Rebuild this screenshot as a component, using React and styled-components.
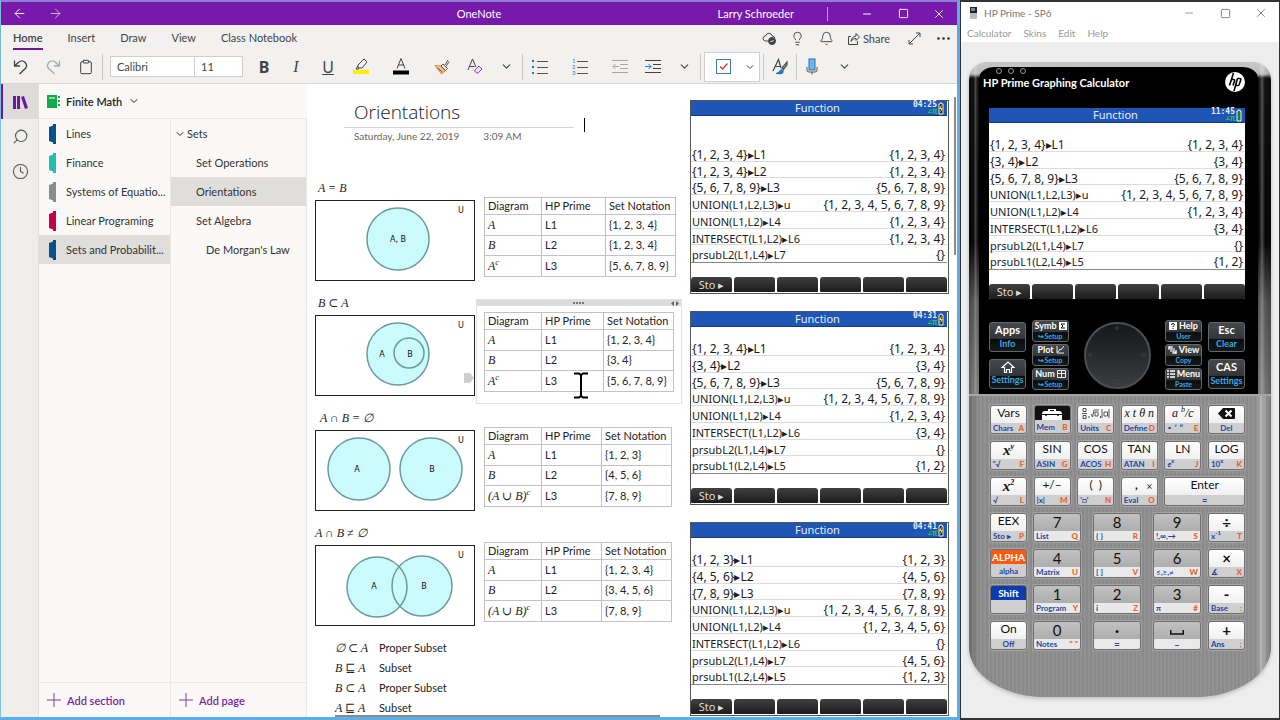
import React from "react";
import styled, { createGlobalStyle } from "styled-components";
import { ArrowLeft, ArrowRight, Bell, ChevronDown, Clipboard, Clock, Lightbulb, Minus, Search, Square, X } from "lucide-react";

const ui = `Lato, "Open Sans", sans-serif`;
const screenFont = `"Noto Sans", "Open Sans", sans-serif`;
const notes = `Lato, "Open Sans", sans-serif`;
const math = `"Liberation Serif", "DejaVu Serif", serif`;

const sections = [
  { name: "Lines", color: "#0b4f8c" },
  { name: "Finance", color: "#21bfae" },
  { name: "Systems of Equatio...", color: "#848d90" },
  { name: "Linear Programing", color: "#c4004f" },
  { name: "Sets and Probabilit...", color: "#0b4f8c", selected: true },
];

const pages = [
  { name: "Sets", indent: 3, open: true },
  { name: "Set Operations", indent: 25 },
  { name: "Orientations", indent: 25, selected: true },
  { name: "Set Algebra", indent: 25 },
  { name: "De Morgan's Law", indent: 35 },
];

const blocks = [
  {
    label: "A = B",
    indent: 3,
    circles: [[82, 38, 31]],
    letters: [["A, B", 82, 41]],
    middle: 64,
    rows: [["A", "L1", "{1, 2, 3, 4}"], ["B", "L2", "{1, 2, 3, 4}"], ["A", "L3", "{5, 6, 7, 8, 9}", "c"]],
  },
  {
    label: "B ⊂ A",
    indent: 3,
    circles: [[82, 38, 31], [93, 37, 15]],
    letters: [["A", 66, 41], ["B", 94, 41]],
    middle: 62,
    active: true,
    rows: [["A", "L1", "{1, 2, 3, 4}"], ["B", "L2", "{3, 4}"], ["A", "L3", "{5, 6, 7, 8, 9}", "c"]],
  },
  {
    label: "A ∩ B = ∅",
    indent: 5,
    circles: [[43, 38, 31], [115, 38, 31]],
    letters: [["A", 41, 41], ["B", 116, 41]],
    middle: 60,
    rows: [["A", "L1", "{1, 2, 3}"], ["B", "L2", "{4, 5, 6}"], ["(A ∪ B)", "L3", "{7, 8, 9}", "c"]],
  },
  {
    label: "A ∩ B ≠ ∅",
    indent: 0,
    circles: [[61, 41, 30], [106, 40, 30]],
    letters: [["A", 58, 43], ["B", 108, 43]],
    middle: 60,
    rows: [["A", "L1", "{1, 2, 3, 4}"], ["B", "L2", "{3, 4, 5, 6}"], ["(A ∪ B)", "L3", "{7, 8, 9}", "c"]],
  },
];

const subsets = [
  ["∅ ⊂ A", "Proper Subset"],
  ["B ⊑ A", "Subset"],
  ["B ⊂ A", "Proper Subset"],
  ["A ⊑ A", "Subset"],
];

const screens = [
  {
    time: "04:25",
    lines: [
      ["{1, 2, 3, 4}▸L1", "{1, 2, 3, 4}"],
      ["{1, 2, 3, 4}▸L2", "{1, 2, 3, 4}"],
      ["{5, 6, 7, 8, 9}▸L3", "{5, 6, 7, 8, 9}"],
      ["UNION(L1,L2,L3)▸u", "{1, 2, 3, 4, 5, 6, 7, 8, 9}"],
      ["UNION(L1,L2)▸L4", "{1, 2, 3, 4}"],
      ["INTERSECT(L1,L2)▸L6", "{1, 2, 3, 4}"],
      ["prsubL2(L1,L4)▸L7", "{}"],
    ],
  },
  {
    time: "04:31",
    lines: [
      ["{1, 2, 3, 4}▸L1", "{1, 2, 3, 4}"],
      ["{3, 4}▸L2", "{3, 4}"],
      ["{5, 6, 7, 8, 9}▸L3", "{5, 6, 7, 8, 9}"],
      ["UNION(L1,L2,L3)▸u", "{1, 2, 3, 4, 5, 6, 7, 8, 9}"],
      ["UNION(L1,L2)▸L4", "{1, 2, 3, 4}"],
      ["INTERSECT(L1,L2)▸L6", "{3, 4}"],
      ["prsubL2(L1,L4)▸L7", "{}"],
      ["prsubL1(L2,L4)▸L5", "{1, 2}"],
    ],
  },
  {
    time: "04:41",
    lines: [
      ["{1, 2, 3}▸L1", "{1, 2, 3}"],
      ["{4, 5, 6}▸L2", "{4, 5, 6}"],
      ["{7, 8, 9}▸L3", "{7, 8, 9}"],
      ["UNION(L1,L2,L3)▸u", "{1, 2, 3, 4, 5, 6, 7, 8, 9}"],
      ["UNION(L1,L2)▸L4", "{1, 2, 3, 4, 5, 6}"],
      ["INTERSECT(L1,L2)▸L6", "{}"],
      ["prsubL2(L1,L4)▸L7", "{4, 5, 6}"],
      ["prsubL1(L2,L4)▸L5", "{1, 2, 3}"],
    ],
  },
];

const functionKeys = [
  { top: "Vars", sub: "Chars", alpha: "A" },
  { top: <ToolboxIcon />, sub: "Mem", alpha: "B", tone: "dark" },
  { top: <TemplateIcon />, sub: "Units", alpha: "C" },
  { top: "x t θ n", sub: "Define", alpha: "D", serif: true },
  { top: <>a <sup>b</sup>/c</>, sub: "∘ ′ ″", alpha: "E", serif: true },
  { top: <DeleteIcon />, sub: "Del" },
  { top: <>x<sup>y</sup></>, sub: "ⁿ√", alpha: "F", serif: true, large: true },
  { top: "SIN", sub: "ASIN", alpha: "G" },
  { top: "COS", sub: "ACOS", alpha: "H" },
  { top: "TAN", sub: "ATAN", alpha: "I" },
  { top: "LN", sub: <i>e<sup>x</sup></i>, alpha: "J" },
  { top: "LOG", sub: <span>10<sup>x</sup></span>, alpha: "K" },
  { top: <>x<sup>2</sup></>, sub: "√", alpha: "L", serif: true, large: true },
  { top: "+/–", sub: "|x|", alpha: "M" },
  { top: "(  )", sub: "'□'", alpha: "N" },
  { top: <CommaLabel />, sub: "Eval", alpha: "O" },
  { top: "Enter", sub: "≈", wide: true, sign: true },
];

const numberRows = [
  [
    { top: "EEX", sub: "Sto ▸", alpha: "P" },
    { top: "7", sub: "List", alpha: "Q" },
    { top: "8", sub: "{ }", alpha: "R" },
    { top: "9", sub: "!,∞,→", alpha: "S" },
    { top: "÷", sub: <span>x<sup>-1</sup></span>, alpha: "T", large: true },
  ],
  [
    { top: "ALPHA", sub: "alpha", tone: "orange" },
    { top: "4", sub: "Matrix", alpha: "U" },
    { top: "5", sub: "[ ]", alpha: "V" },
    { top: "6", sub: "≤,≥,≠", alpha: "W" },
    { top: "×", sub: "∡", alpha: "X", large: true },
  ],
  [
    { top: "Shift", sub: "", tone: "blue" },
    { top: "1", sub: "Program", alpha: "Y" },
    { top: "2", sub: "i", alpha: "Z" },
    { top: "3", sub: "π", alpha: "#" },
    { top: "-", sub: "Base", alpha: ":", large: true },
  ],
  [
    { top: "On", sub: "Off" },
    { top: "0", sub: "Notes", alpha: "\" \"" },
    { top: "·", sub: "=", sign: true, large: true },
    { top: <SpaceIcon />, sub: "–", sign: true },
    { top: "+", sub: "Ans", alpha: ";", large: true },
  ],
];

export default function App() {
  return (
    <>
      <GlobalStyle />
      <Desktop>
        <OneNote />
        <HpPrime />
      </Desktop>
    </>
  );
}

function OneNote() {
  return (
    <NoteWindow>
      <TitleBar>
        <TitleGroup>
          <TitleButton aria-label="Back"><ArrowLeft size={15} strokeWidth={1.5} /></TitleButton>
          <TitleButton aria-label="Forward" $dim><ArrowRight size={15} strokeWidth={1.5} /></TitleButton>
        </TitleGroup>
        <span>OneNote</span>
        <TitleGroup $end>
          <Account>Larry Schroeder</Account>
          <TitleButton aria-label="Minimize"><Minus size={12} strokeWidth={2} /></TitleButton>
          <TitleButton aria-label="Maximize"><Square size={11} strokeWidth={2} /></TitleButton>
          <TitleButton aria-label="Close"><X size={14} strokeWidth={1.5} /></TitleButton>
        </TitleGroup>
      </TitleBar>
      <Ribbon>
        <TabRow>
          <Tab $active>Home</Tab>
          <Tab>Insert</Tab>
          <Tab>Draw</Tab>
          <Tab>View</Tab>
          <Tab>Class Notebook</Tab>
          <TabActions>
            <Tool $w={28} aria-label="Sync"><CloudIcon /></Tool>
            <Tool $w={29} aria-label="Tell me"><Lightbulb size={15} strokeWidth={1.5} /></Tool>
            <Tool $w={29} aria-label="Notifications"><Bell size={15} strokeWidth={1.5} /></Tool>
            <ShareButton><ShareIcon /> Share</ShareButton>
            <Tool $w={30} aria-label="Full screen"><ExpandIcon /></Tool>
            <Tool $w={28} aria-label="More"><DotsIcon /></Tool>
          </TabActions>
        </TabRow>
        <Toolbar>
          <Tool $w={32} aria-label="Undo"><UndoIcon /></Tool>
          <Tool $w={32} aria-label="Redo" $dim><RedoIcon /></Tool>
          <Tool $w={33} aria-label="Paste"><Clipboard size={16} strokeWidth={1.5} /></Tool>
          <Divider />
          <FontBox>
            <FontInput aria-label="Font" defaultValue="Calibri" $w={83} />
            <FontInput aria-label="Font size" defaultValue="11" $w={48} />
          </FontBox>
          <Tool $w={32} $letter="bold">B</Tool>
          <Tool $w={32} $letter="italic">I</Tool>
          <Tool $w={32} $letter="underline">U</Tool>
          <Tool $w={34} aria-label="Highlight"><HighlightIcon /></Tool>
          <Tool $w={46} aria-label="Font color"><FontColorIcon /></Tool>
          <Tool $w={36} aria-label="Format painter"><PainterIcon /></Tool>
          <Tool $w={30} aria-label="Clear formatting"><EraserIcon /></Tool>
          <Tool $w={32} aria-label="More font options"><ChevronDown size={13} strokeWidth={2} /></Tool>
          <Divider />
          <Tool $w={34} aria-label="Bullets"><BulletsIcon /></Tool>
          <Tool $w={46} aria-label="Numbering"><NumberingIcon /></Tool>
          <Tool $w={34} aria-label="Decrease indent" $dim><IndentIcon out /></Tool>
          <Tool $w={32} aria-label="Increase indent"><IndentIcon /></Tool>
          <Tool $w={31} aria-label="More paragraph options"><ChevronDown size={13} strokeWidth={2} /></Tool>
          <Divider />
          <TagBox>
            <Tool $w={36} aria-label="To do tag"><TodoIcon /></Tool>
            <Tool $w={18} aria-label="More tags"><ChevronDown size={12} strokeWidth={2} /></Tool>
          </TagBox>
          <Divider />
          <Tool $w={32} aria-label="Styles"><StylesIcon /></Tool>
          <Divider />
          <Tool $w={30} aria-label="Dictate"><MicIcon /></Tool>
          <Tool $w={34} aria-label="More"><ChevronDown size={13} strokeWidth={2} /></Tool>
        </Toolbar>
      </Ribbon>
      <Workspace>
        <Rail>
          <RailButton $active aria-label="Notebooks"><BooksIcon /></RailButton>
          <RailButton aria-label="Search"><FlippedSearch size={17} strokeWidth={1.5} /></RailButton>
          <RailButton aria-label="Recent"><Clock size={17} strokeWidth={1.5} /></RailButton>
        </Rail>
        <Navigation>
          <NotebookButton>
            <NotebookIcon />
            Finite Math
            <ChevronDown size={12} strokeWidth={2} />
          </NotebookButton>
          <NavLists>
            <NavColumn $w={132}>
              {sections.map((section) => (
                <NavItem key={section.name} $indent={10} $gap={10} $selected={section.selected}>
                  <svg width="7" height="20" viewBox="0 0 7 20">
                    <path d="M0 3l4-1.500V0h3v20H4v-1.500L0 17z" fill={section.color} />
                  </svg>
                  {section.name}
                </NavItem>
              ))}
              <AddButton><AddIcon /> Add section</AddButton>
            </NavColumn>
            <NavColumn $w={136}>
              {pages.map((page) => (
                <NavItem key={page.name} $indent={page.indent} $gap={1} $selected={page.selected}>
                  {page.open && <ChevronDown size={12} strokeWidth={2} />}
                  {page.name}
                </NavItem>
              ))}
              <AddButton><AddIcon /> Add page</AddButton>
            </NavColumn>
          </NavLists>
        </Navigation>
        <Canvas>
          <NotesColumn>
            <PageHeader>
              <PageTitle>Orientations</PageTitle>
              <PageDate><span>Saturday, June 22, 2019</span><span>3:09 AM</span></PageDate>
              <Caret />
            </PageHeader>
            {blocks.map((block) => <SetBlock key={block.label} block={block} />)}
            <SubsetList>
              {subsets.map(([symbol, text]) => (
                <SubsetRow key={symbol}><MathText>{symbol}</MathText><span>{text}</span></SubsetRow>
              ))}
            </SubsetList>
            <PageScroll />
          </NotesColumn>
          <ScreenColumn>
            {screens.map((screen) => (
              <CalcScreen key={screen.time} screen={screen} framed />
            ))}
          </ScreenColumn>
          <ScrollThumb />
        </Canvas>
      </Workspace>
    </NoteWindow>
  );
}

function SetBlock({ block }) {
  return (
    <Block>
      <div>
        <BlockLabel $indent={block.indent}>{block.label}</BlockLabel>
        <VennBox>
          <svg width="158" height="79" viewBox="0 0 158 79">
            {block.circles.map(([x, y, r]) => <circle key={x} cx={x} cy={y} r={r} fill="#ccfbfe" />)}
            {block.circles.map(([x, y, r]) => (
              <circle key={x} cx={x} cy={y} r={r} fill="none" stroke="#6c9a9b" strokeWidth="1.5" />
            ))}
            {block.letters.map(([text, x, y]) => <VennText key={text} x={x} y={y}>{text}</VennText>)}
            <VennText x="145" y="12">U</VennText>
          </svg>
          {block.active && <DragTag viewBox="0 0 10 10"><path d="M0 0h6l4 5-4 5H0z" fill="#cfcfcf" /></DragTag>}
        </VennBox>
      </div>
      <NoteFrame $active={block.active}>
        <FrameHandle $active={block.active}>
          <svg width="12" height="3" viewBox="0 0 12 3">
            <path d="M0 1h2M3 1h2M6 1h2M9 1h2" stroke="#555" strokeWidth="1.500" />
          </svg>
          <svg width="9" height="5" viewBox="0 0 9 5"><path d="M3 0v5L0 2.500zM5 0v5l3-2.500z" fill="#666" /></svg>
        </FrameHandle>
        <SetTable>
          <colgroup>
            <TableCol $w={57} /><TableCol $w={block.middle} /><TableCol $w={70} />
          </colgroup>
          <thead>
            <tr><th>Diagram</th><th>HP Prime</th><th>Set Notation</th></tr>
          </thead>
          <tbody>
            {block.rows.map(([name, list, value, power]) => (
              <tr key={list}>
                <td><MathText>{name}{power && <sup>{power}</sup>}</MathText></td>
                <td>{list}</td>
                <td>{value}</td>
              </tr>
            ))}
          </tbody>
        </SetTable>
        {block.active && (
          <TextCursor viewBox="0 0 16 27">
            <path d="M1 1.500h5l2 1.500 2-1.500h5M8 3v21M1 25.500h5l2-1.500 2 1.500h5" fill="none" stroke="#000" strokeWidth="2" />
          </TextCursor>
        )}
      </NoteFrame>
    </Block>
  );
}

function CalcScreen({ screen, framed }) {
  return (
    <ScreenFrame $framed={framed}>
      <ScreenHeader>
        <span />
        <span>Function</span>
        <ScreenStatus>
          <StatusText>{screen.time}<Angle>∠π</Angle></StatusText>
          <svg width="6" height="13" viewBox="0 0 6 13">
            <path d="M1 2h1V1h2v1h1v10H1z" fill={framed ? "#222" : "#17803a"} stroke="#eee" />
            {framed && <path d="M4 2L1 7h2l-1 4 3-5H3z" fill="#ffe11a" />}
          </svg>
        </ScreenStatus>
      </ScreenHeader>
      <ScreenLines>
        {screen.lines.map(([input, result]) => (
          <ScreenLine key={input}>
            <Entry $call={!input.startsWith("{")}>{input}</Entry>
            <span>{result}</span>
          </ScreenLine>
        ))}
      </ScreenLines>
      <SoftKeys>
        <SoftKey>Sto ▸</SoftKey>
        {[2, 3, 4, 5, 6].map((n) => <SoftKey key={n} aria-label={`Soft key ${n}`} />)}
      </SoftKeys>
    </ScreenFrame>
  );
}

function HpPrime() {
  return (
    <PrimeWindow>
      <PrimeTitle>
        <svg width="7" height="12" viewBox="0 0 7 12">
          <rect width="7" height="12" rx="1" fill="#bbb" /><rect width="7" height="6" fill="#222" /><rect x="1" y="1" width="4" height="3" fill="#789" />
        </svg>
        <PrimeName>HP Prime - SP6</PrimeName>
        <PrimeControl aria-label="Minimize"><Minus size={12} strokeWidth={1.5} /></PrimeControl>
        <PrimeControl aria-label="Maximize"><Square size={11} strokeWidth={2} /></PrimeControl>
        <PrimeControl aria-label="Close"><X size={14} strokeWidth={1.5} /></PrimeControl>
      </PrimeTitle>
      <PrimeMenu>
        <button>Calculator</button><button>Skins</button><button>Edit</button><button>Help</button>
      </PrimeMenu>
      <PrimeBody>
        <Case>
          <Glass>
            <Leds><i /><i /><i /></Leds>
            <Brand>
              HP Prime Graphing Calculator
              <svg width="20" height="20" viewBox="0 0 20 20">
                <circle cx="10" cy="10" r="10" fill="#fff" />
                <path d="M8.500 1L4.500 13.500M6.500 7.500h2q1.500 0 1 1.500L8 13.500M12.500 6.500L9 19M12.500 6.500h2.200q1.500 0 1 1.500l-1.500 4.500q-.4 1-1.600 1h-1.700" fill="none" stroke="#000" strokeWidth="1.600" />
              </svg>
            </Brand>
            <CalcScreen screen={{ time: "11:45", lines: screens[1].lines }} />
            <ControlPad>
              <PadColumn $gap={7}>
                <DarkKey $tall><span>Apps</span><small>Info</small></DarkKey>
                <DarkKey $tall aria-label="Home settings"><span><HomeIcon /></span><small>Settings</small></DarkKey>
              </PadColumn>
              <PadColumn $gap={2}>
                <DarkKey><span>Symb <SymbIcon /></span><small>↪Setup</small></DarkKey>
                <DarkKey><span>Plot <PlotIcon /></span><small>↪Setup</small></DarkKey>
                <DarkKey><span>Num <GridIcon /></span><small>↪Setup</small></DarkKey>
              </PadColumn>
              <Wheel aria-label="Cursor pad">
                <svg width="63" height="63" viewBox="0 0 63 63" fill="#050505" stroke="#6a6d70" strokeWidth=".6">
                  <circle cx="31" cy="4" r="1.300" /><circle cx="31" cy="58" r="1.300" /><circle cx="4" cy="31" r="1.300" /><circle cx="58" cy="31" r="1.300" />
                </svg>
              </Wheel>
              <PadColumn $gap={2}>
                <DarkKey><span><HelpIcon /> Help</span><small>User</small></DarkKey>
                <DarkKey><span><ViewIcon /> View</span><small>Copy</small></DarkKey>
                <DarkKey><span><MenuIcon /> Menu</span><small>Paste</small></DarkKey>
              </PadColumn>
              <PadColumn $gap={7}>
                <DarkKey $tall><span>Esc</span><small>Clear</small></DarkKey>
                <DarkKey $tall><span>CAS</span><small>Settings</small></DarkKey>
              </PadColumn>
            </ControlPad>
          </Glass>
          <Keyboard>
            <FunctionGrid>
              {functionKeys.map((item, index) => <CalcKey key={index} item={item} />)}
            </FunctionGrid>
            {numberRows.map((row, index) => (
              <NumberRow key={index}>
                <CalcKey item={row[0]} />
                <Digits>
                  {row.slice(1, 4).map((item, n) => <CalcKey key={n} item={item} digit />)}
                </Digits>
                <CalcKey item={row[4]} />
              </NumberRow>
            ))}
          </Keyboard>
        </Case>
      </PrimeBody>
    </PrimeWindow>
  );
}

function CalcKey({ item, digit }) {
  return (
    <Key $digit={digit} $wide={item.wide}>
      <KeyTop $digit={digit} $tone={item.tone} $serif={item.serif} $large={item.large}>{item.top}</KeyTop>
      <KeySub $digit={digit} $sign={item.sign} $center={!item.alpha}>
        <span>{item.sub}</span>
        {item.alpha && <b>{item.alpha}</b>}
      </KeySub>
    </Key>
  );
}

function CommaLabel() {
  return <CommaRow><b>,</b><small>⨯</small></CommaRow>;
}

/* ---------- icons ---------- */

function UndoIcon() {
  return (
    <svg width="16" height="16" viewBox="0 0 16 16" fill="none" stroke="currentColor" strokeWidth="1.300">
      <path d="M1.500 1.500v5.500H7M1.500 7L5.500 3.200q3.500-2.700 6.500 0 3 3.300.3 6.400L6.500 15" />
    </svg>
  );
}

function RedoIcon() {
  return (
    <svg width="16" height="16" viewBox="0 0 16 16" fill="none" stroke="currentColor" strokeWidth="1.300">
      <path d="M14.500 1.500v5.500H9M14.500 7l-4-3.800Q7 .5 4 3.200 1 6.500 3.700 9.600L9.500 15" />
    </svg>
  );
}

function HighlightIcon() {
  return (
    <svg width="16" height="17" viewBox="0 0 16 17" fill="none" stroke="#444">
      <path d="M5 7l6-6 3 3-5 6H5zM5 8l-2 3h3" />
      <path d="M0 14h16" stroke="#fff200" strokeWidth="4" />
    </svg>
  );
}

function FontColorIcon() {
  return (
    <svg width="16" height="17" viewBox="0 0 16 17" fill="none" stroke="#444">
      <path d="M4 10.500L8 .5l4 10M5.300 7h5.400" />
      <path d="M0 14.500h16" stroke="#000" strokeWidth="4" />
    </svg>
  );
}

function PainterIcon() {
  return (
    <svg width="16" height="16" viewBox="0 0 16 16" fill="none" stroke="#555">
      <path d="M1 6.500l6 .5 4 5-3.500 3z" fill="#f8c48c" stroke="#e58a2c" />
      <path d="M3.500 9l5 4M7 7l2-2 4.500 4.500-2 2zM11 6l3-5" />
      <path d="M12 7.500l3-5" />
    </svg>
  );
}

function EraserIcon() {
  return (
    <svg width="16" height="17" viewBox="0 0 16 17" fill="none" stroke="#444">
      <path d="M1 12L5.500 1l3.500 8M2.500 8.500h5" />
      <path d="M8 12l4-4 3 3-4 4H9.500L7.500 13z" fill="#f3dcf7" stroke="#a23bb5" />
    </svg>
  );
}

function BulletsIcon() {
  return (
    <svg width="16" height="16" viewBox="0 0 16 16">
      <path d="M0 1h2v2H0zM0 7h2v2H0zM0 13h2v2H0z" fill="#1f7fc4" />
      <path d="M5 2.500h11M5 8.500h11M5 14.500h11" stroke="#555" />
    </svg>
  );
}

function NumberingIcon() {
  return (
    <svg width="16" height="20" viewBox="0 0 16 20">
      <NumeralText x="0" y="6">1</NumeralText>
      <NumeralText x="0" y="12">2</NumeralText>
      <NumeralText x="0" y="18">3</NumeralText>
      <path d="M5 4.500h11M5 10.500h11M5 16.500h11" stroke="#555" />
    </svg>
  );
}

function IndentIcon({ out }) {
  return (
    <svg width="16" height="16" viewBox="0 0 16 16" fill="none">
      <path d="M0 1.500h16M8 5.500h8M8 9.500h8M0 13.500h16" stroke="currentColor" />
      <path d={out ? "M7 7.500H1M3.500 5L1 7.500 3.500 10" : "M0 7.500h6M3.500 5L6 7.500 3.500 10"} stroke={out ? "currentColor" : "#1f7fc4"} />
    </svg>
  );
}

function TodoIcon() {
  return (
    <svg width="15" height="15" viewBox="0 0 15 15" fill="none">
      <rect x=".5" y=".5" width="14" height="14" stroke="#3f8198" />
      <path d="M4 7.500L6.500 10 11.500 4.500" stroke="#e0322c" strokeWidth="1.300" />
    </svg>
  );
}

function StylesIcon() {
  return (
    <svg width="16" height="17" viewBox="0 0 16 17" fill="none" stroke="#444" strokeWidth="1.200">
      <path d="M1 13L6.500 1.500 9 10M3.500 8.500h5" />
      <path d="M15 4l-5 6 1.500 1.500L15 7z" fill="#999" stroke="#555" />
      <path d="M4 15.500q3 0 4.500-3 1-1.500 2.500 0 .5 2.500-2.500 3.200z" fill="#2f8be0" stroke="#1c6fc0" />
    </svg>
  );
}

function MicIcon() {
  return (
    <svg width="12" height="17" viewBox="0 0 12 17" fill="none">
      <rect x="3" y="1" width="6" height="11" fill="#6cb6f3" stroke="#2d6ea8" />
      <path d="M1 9v3q0 2 2 2h6q2 0 2-2V9M6 14v2.500" stroke="#555" />
    </svg>
  );
}

function CloudIcon() {
  return (
    <svg width="14" height="14" viewBox="0 0 14 14" fill="none" stroke="#444">
      <path d="M6 10H3.500Q1 9.500 1 7.200 1.300 5 3.500 5 4.500 2 7 2.200q2.500.2 3.200 2.800 2.500.3 2.600 2" />
      <circle cx="10" cy="10" r="3.500" fill="#444" />
      <path d="M8.500 10l1 1 2-2" stroke="#fff" />
    </svg>
  );
}

function ShareIcon() {
  return (
    <svg width="12" height="13" viewBox="0 0 12 13" fill="none" stroke="#444">
      <path d="M3 4.500H.5v8h9V9M3 9.500q.5-5 5-5.500V1.500L11.500 5 8 8.500V6.300Q5 6 3 9.500z" />
    </svg>
  );
}

function ExpandIcon() {
  return (
    <svg width="13" height="13" viewBox="0 0 13 13" fill="none" stroke="#444">
      <path d="M1.500 11.500l10-10M8 1h4v4M1 8v4h4" />
    </svg>
  );
}

function DotsIcon() {
  return (
    <svg width="13" height="3" viewBox="0 0 13 3" fill="#333">
      <circle cx="1.500" cy="1.500" r="1.300" /><circle cx="6.500" cy="1.500" r="1.300" /><circle cx="11.500" cy="1.500" r="1.300" />
    </svg>
  );
}

function BooksIcon() {
  return (
    <svg width="15" height="14" viewBox="0 0 15 14" fill="#6a1b9a">
      <path d="M0 1h3v13H0zM4 1h3v13H4zM8 2l3-1 4 12-3 1z" />
    </svg>
  );
}

function NotebookIcon() {
  return (
    <svg width="13" height="13" viewBox="0 0 13 13" fill="#15a84c">
      <path d="M0 0h10v13H0zM11 1h2v2h-2zM11 5h2v2h-2zM11 9h2v2h-2z" />
      <path d="M2 3h6" stroke="#fff" />
    </svg>
  );
}

function AddIcon() {
  return <svg width="14" height="14" viewBox="0 0 14 14"><path d="M7 0v14M0 7h14" stroke="#7b3f9c" /></svg>;
}

function ToolboxIcon() {
  return (
    <svg width="22" height="11" viewBox="0 0 22 11">
      <path d="M1 5q0-3 3-3h3V0h8v2h3q3 0 3 3zM1 6h20v5H1zM9 1v1h4V1z" fill="#fff" fillRule="evenodd" />
      <path d="M5 5v2M17 5v2" stroke="#111" strokeWidth="1.500" />
    </svg>
  );
}

function TemplateIcon() {
  return (
    <svg width="28" height="11" viewBox="0 0 28 11" fill="none" stroke="#444" strokeWidth=".9">
      <path d="M1 .5h3v3H1zM0 5.500h5M1 7.500h3v3H1zM7 8v2M9 6l1.500 3L12 2h5M13 4h3v4h-3zM18.500 8v2M20 1v9M27 1v9M22 4h3.500v4H22z" />
    </svg>
  );
}

function DeleteIcon() {
  return (
    <svg width="17" height="11" viewBox="0 0 17 11">
      <path d="M5 0h11q1 0 1 1v9q0 1-1 1H5L0 5.500z" fill="#111" />
      <path d="M7.500 2.500l6 6M13.500 2.500l-6 6" stroke="#fff" strokeWidth="2" />
    </svg>
  );
}

function SpaceIcon() {
  return <svg width="14" height="5" viewBox="0 0 14 5"><path d="M.7 0v4h12.600V0" fill="none" stroke="#111" strokeWidth="1.500" /></svg>;
}

function HomeIcon() {
  return (
    <svg width="14" height="12" viewBox="0 0 14 12" fill="none" stroke="#fff" strokeWidth="1.200">
      <path d="M1 6.500L7 1l6 5.500h-2.500v5H8.500v-3h-3v3h-2v-5z" />
    </svg>
  );
}

function SymbIcon() {
  return <svg width="8" height="8" viewBox="0 0 8 8"><path d="M0 0h8v8H0z" fill="#fff" /><path d="M6 2H2l2 2-2 2h4" fill="none" stroke="#111" /></svg>;
}

function PlotIcon() {
  return <svg width="8" height="8" viewBox="0 0 8 8" fill="none" stroke="#eee"><path d="M1 0v7h7M2 6l2-3 1 1 3-4" /></svg>;
}

function GridIcon() {
  return <svg width="9" height="8" viewBox="0 0 9 8" fill="none" stroke="#eee"><path d="M.5.5h8v7h-8zM.5 3.500h8M4.500 0v8" /></svg>;
}

function HelpIcon() {
  return <svg width="8" height="8" viewBox="0 0 8 8"><path d="M0 0h8v8H0z" fill="#fff" /><path d="M2.500 3q0-1.500 1.500-1.500T5.500 3Q4 4 4 5M4 6v1" fill="none" stroke="#111" /></svg>;
}

function ViewIcon() {
  return <svg width="9" height="8" viewBox="0 0 9 8" fill="#fff" stroke="#333" strokeWidth=".5"><path d="M0 0h5v4H0zM2 2h5v4H2zM4 4h5v4H4z" /></svg>;
}

function MenuIcon() {
  return <svg width="8" height="8" viewBox="0 0 8 8"><path d="M0 1h2M3 1h5M0 4h2M3 4h5M0 7h2M3 7h5" stroke="#fff" strokeWidth="1.500" /></svg>;
}

/* ---------- styles ---------- */

const GlobalStyle = createGlobalStyle`
  * {
    box-sizing: border-box;
  }
  body {
    margin: 0;
    background: #fff;
    font-family: ${ui};
  }
  button {
    margin: 0;
    padding: 0;
    border: 0;
    background: none;
    color: inherit;
    font: inherit;
    cursor: pointer;
  }
  svg {
    flex: none;
  }
  sup {
    font-size: 70%;
    line-height: 0;
  }
`;

const Desktop = styled.div`
  display: grid;
  grid-template-columns: minmax(0, 3fr) minmax(320px, 1fr);
  min-height: 100vh;
`;

const NoteWindow = styled.section`
  display: flex;
  flex-direction: column;
  border: solid #5cade8;
  border-width: 2px 3px 3px 1px;
  border-top-color: #8f80d6;
  border-left-color: #7ec0dd;
  min-width: 0;
`;

const TitleBar = styled.header`
  display: grid;
  grid-template-columns: 1fr auto 1fr;
  align-items: center;
  height: 23px;
  background: #7719aa;
  color: #fff;
  font-size: 11px;
`;

const TitleGroup = styled.div`
  display: flex;
  align-items: center;
  justify-content: ${(p) => (p.$end ? "flex-end" : "flex-start")};
`;

const TitleButton = styled.button`
  display: grid;
  place-items: center;
  width: 36px;
  height: 22px;
  opacity: ${(p) => (p.$dim ? 0.7 : 1)};
`;

const Account = styled.span`
  margin-right: 21px;
  padding-right: 33px;
  border-right: 1px solid #c69be0;
  line-height: 14px;
`;

const Ribbon = styled.div`
  background: #f2f1f0;
  border-bottom: 1px solid #d5d4d3;
  box-shadow: 0 1px 4px #0000001c;
  color: #444;
`;

const TabRow = styled.nav`
  display: flex;
  align-items: flex-end;
  gap: 25px;
  height: 25px;
  padding-left: 12px;
`;

const Tab = styled.button`
  padding-bottom: 1px;
  border-bottom: 2px solid ${(p) => (p.$active ? "#6a1b9a" : "transparent")};
  font-size: 11px;
  font-weight: ${(p) => (p.$active ? 600 : 400)};
  line-height: 18px;
  white-space: nowrap;
`;

const TabActions = styled.div`
  display: flex;
  align-items: center;
  height: 24px;
  margin-left: auto;
`;

const Tool = styled.button`
  display: grid;
  place-items: center;
  width: ${(p) => p.$w}px;
  height: 24px;
  color: ${(p) => (p.$dim ? "#a9a9a9" : "#444")};
  font-family: ${(p) => (p.$letter === "italic" ? math : screenFont)};
  font-size: 16px;
  font-weight: ${(p) => (p.$letter === "bold" ? 700 : 400)};
  font-style: ${(p) => (p.$letter === "italic" ? "italic" : "normal")};
  text-decoration: ${(p) => (p.$letter === "underline" ? "underline" : "none")};
  line-height: 20px;
`;

const ShareButton = styled.button`
  display: flex;
  align-items: center;
  gap: 3px;
  margin: 0 9px 0 7px;
  font-size: 11px;
`;

const Toolbar = styled.div`
  display: flex;
  align-items: center;
  height: 33px;
  padding-left: 4px;
`;

const Divider = styled.i`
  width: 1px;
  height: 26px;
  background: #c9c8c7;
`;

const FontBox = styled.div`
  display: flex;
  margin: 0 5px 0 7px;
  border: 1px solid #d0cfce;
`;

const FontInput = styled.input`
  width: ${(p) => p.$w}px;
  height: 19px;
  margin: 0;
  padding: 0 6px;
  border: 0;
  background: #fff;
  color: #444;
  font-family: ${ui};
  font-size: 11px;
  & + & {
    border-left: 1px solid #d0cfce;
  }
`;

const TagBox = styled.div`
  display: flex;
  align-items: center;
  height: 30px;
  margin: 0 3px;
  border: 1px solid #d0cfce;
  background: #fff;
`;

const Workspace = styled.div`
  display: flex;
  flex: 1;
`;

const Rail = styled.div`
  width: 38px;
  background: #f0eeed;
  border-right: 1px solid #e2e0df;
`;

const RailButton = styled.button`
  display: grid;
  place-items: center;
  width: 100%;
  height: 35px;
  border-left: 2px solid ${(p) => (p.$active ? "#6a1b9a" : "transparent")};
  background: ${(p) => (p.$active ? "#dedcdb" : "none")};
  color: #555;
`;

const FlippedSearch = styled(Search)`
  transform: scaleX(-1);
`;

const Navigation = styled.div`
  display: flex;
  flex-direction: column;
  background: #faf9f8;
`;

const NotebookButton = styled.button`
  display: flex;
  align-items: center;
  gap: 6px;
  height: 35px;
  padding-left: 8px;
  border-bottom: 1px solid #e9e8e7;
  color: #222;
  font-size: 11px;
  font-weight: 600;
`;

const NavLists = styled.div`
  display: flex;
  flex: 1;
`;

const NavColumn = styled.div`
  display: flex;
  flex-direction: column;
  width: ${(p) => p.$w}px;
  border-right: 1px solid #e9e8e7;
`;

const NavItem = styled.button`
  display: flex;
  align-items: center;
  gap: ${(p) => p.$gap}px;
  height: 29px;
  padding-left: ${(p) => p.$indent}px;
  background: ${(p) => (p.$selected ? "#dfdedd" : "none")};
  color: #333;
  font-size: 11px;
  white-space: nowrap;
`;

const AddButton = styled.button`
  display: flex;
  align-items: center;
  gap: 6px;
  height: 35px;
  margin-top: auto;
  padding-left: 8px;
  border-top: 1px solid #e9e8e7;
  color: #7a1fa2;
  font-size: 11px;
  font-weight: 600;
`;

const Canvas = styled.main`
  display: flex;
  flex: 1;
  justify-content: space-between;
  padding: 0 1px 0 8px;
  background: #fff;
`;

const NotesColumn = styled.div`
  display: flex;
  flex-direction: column;
  width: 368px;
  color: #222;
  font-family: ${notes};
  font-size: 11px;
`;

const PageHeader = styled.div`
  position: relative;
  width: 230px;
  height: 96px;
  margin-left: 29px;
  padding-top: 14px;
`;

const PageTitle = styled.h1`
  margin: 0;
  padding-left: 10px;
  border-bottom: 1px solid #d6d6d6;
  color: #222;
  font-family: "Open Sans", sans-serif;
  font-size: 19px;
  font-weight: 300;
  line-height: 29px;
`;

const PageDate = styled.div`
  display: flex;
  gap: 24px;
  padding-left: 10px;
  color: #666;
  font-size: 10px;
  line-height: 16px;
`;

const Caret = styled.i`
  position: absolute;
  top: 34px;
  right: -11px;
  width: 1px;
  height: 14px;
  background: #000;
`;

const Block = styled.section`
  display: grid;
  grid-template-columns: 160px 206px;
  gap: 1px;
  height: 115px;
`;

const BlockLabel = styled.h2`
  margin: 0;
  padding-left: ${(p) => p.$indent}px;
  font-family: ${math};
  font-size: 12px;
  font-style: italic;
  font-weight: 400;
  line-height: 16px;
  height: 20px;
`;

const VennBox = styled.figure`
  position: relative;
  display: flex;
  margin: 0;
  border: 1px solid #222;
`;

const VennText = styled.text`
  font-family: "DejaVu Sans", sans-serif;
  font-size: 8px;
  fill: #111;
  text-anchor: middle;
`;

const NumeralText = styled.text`
  font-family: ${ui};
  font-size: 6px;
  fill: #1f7fc4;
`;

const DragTag = styled.svg`
  position: absolute;
  right: 0;
  bottom: 12px;
  width: 10px;
  height: 10px;
`;

const NoteFrame = styled.div`
  position: relative;
  height: 105px;
  margin-top: 4px;
  border: 1px solid ${(p) => (p.$active ? "#e2e2e2" : "transparent")};
`;

const FrameHandle = styled.div`
  display: grid;
  grid-template-columns: 1fr auto 1fr;
  align-items: center;
  height: 6px;
  margin-bottom: 6px;
  background: #dcdcdc;
  visibility: ${(p) => (p.$active ? "visible" : "hidden")};
  svg:first-child {
    grid-column: 2;
  }
  svg:last-child {
    justify-self: end;
    margin-right: 1px;
  }
`;

const SetTable = styled.table`
  width: min-content;
  height: 80px;
  margin-left: 7px;
  border-collapse: collapse;
  table-layout: fixed;
  th,
  td {
    padding: 0 0 0 3px;
    border: 1px solid #c2c2c2;
    font-weight: 400;
    line-height: 16px;
    text-align: left;
    white-space: nowrap;
  }
`;

const TableCol = styled.col`
  width: ${(p) => p.$w}px;
`;

const TextCursor = styled.svg`
  position: absolute;
  top: 72px;
  left: 96px;
  width: 16px;
  height: 27px;
`;

const MathText = styled.em`
  font-family: ${math};
  font-size: 12px;
`;

const SubsetList = styled.div`
  display: grid;
  grid-auto-rows: 20px;
  height: 75px;
  padding-left: 20px;
`;

const SubsetRow = styled.div`
  display: grid;
  grid-template-columns: 44px 1fr;
  align-items: start;
  line-height: 16px;
`;

const PageScroll = styled.i`
  width: 325px;
  height: 2px;
  margin: auto 0 0 20px;
  background: #8b8b8b;
`;

const ScreenColumn = styled.div`
  display: flex;
  flex: none;
  flex-direction: column;
  gap: 17px;
  width: 259px;
  margin-left: auto;
  margin-right: 5px;
  padding-top: 16px;
`;

const ScrollThumb = styled.i`
  width: 2px;
  height: 158px;
  margin-top: 13px;
  background: #8b8b8b;
`;

const ScreenFrame = styled.div`
  padding: ${(p) => (p.$framed ? "0 1px 1px 0" : "0")};
  border: ${(p) => (p.$framed ? "1px solid #555" : "0")};
  background: #fff;
  color: #1a1a1a;
  font-family: ${screenFont};
  font-size: 12px;
`;

const ScreenHeader = styled.div`
  display: grid;
  grid-template-columns: 1fr auto 1fr;
  align-items: center;
  height: 15px;
  padding-right: 3px;
  border-bottom: 1px solid #123a80;
  background: #1f56b5;
  color: #e6edf8;
  font-size: 11px;
  line-height: 14px;
`;

const ScreenStatus = styled.div`
  display: flex;
  align-items: center;
  justify-content: flex-end;
  gap: 1px;
`;

const StatusText = styled.span`
  display: flex;
  flex-direction: column;
  align-items: flex-end;
  font-family: "DejaVu Sans Mono", monospace;
  font-size: 8px;
  font-weight: 700;
  line-height: 7px;
`;

const Angle = styled.span`
  color: #22c552;
`;

const ScreenLines = styled.div`
  display: grid;
  grid-auto-rows: calc(100% / 8);
  align-content: end;
  height: 147px;
  padding-top: 12px;
  border-bottom: 1px solid #888;
`;

const ScreenLine = styled.div`
  display: flex;
  align-items: baseline;
  justify-content: space-between;
  padding: 1px 2px 0 1px;
  border-bottom: 1px solid #dcdcdc;
  line-height: 17px;
  white-space: nowrap;
  &:last-child {
    border-bottom: 0;
  }
`;

const Entry = styled.span`
  font-size: ${(p) => (p.$call ? 11 : 12)}px;
`;

const SoftKeys = styled.div`
  display: grid;
  grid-template-columns: repeat(6, 1fr);
  gap: 2px;
  margin-top: 14px;
`;

const SoftKey = styled.button`
  height: 15px;
  border-radius: 3px 3px 1px 1px;
  background: linear-gradient(#404040, #1c1c1c);
  color: #ddd;
  font-size: 11px;
  line-height: 14px;
`;

const PrimeWindow = styled.section`
  display: flex;
  flex-direction: column;
  border: solid #333;
  border-width: 2px 1px 2px 1px;
  background: #fff;
`;

const PrimeTitle = styled.header`
  display: flex;
  align-items: center;
  height: 22px;
  padding-left: 9px;
  color: #777;
  font-size: 10px;
`;

const PrimeName = styled.span`
  margin: 0 auto 0 7px;
`;

const PrimeControl = styled.button`
  display: grid;
  place-items: center;
  width: 36px;
  height: 20px;
`;

const PrimeMenu = styled.nav`
  display: flex;
  gap: 12px;
  height: 18px;
  padding-left: 6px;
  color: #999;
  font-size: 10px;
`;

const PrimeBody = styled.div`
  flex: 1;
  padding-top: 20px;
  background: #eee;
`;

const Case = styled.div`
  width: 302px;
  height: 635px;
  margin: 0 auto;
  border-radius: 18px 18px 76px 76px / 18px 18px 50px 50px;
  background:
    linear-gradient(to right, #0003, transparent 3px, transparent 5px, #fff4 6px, #0000 9px, transparent 290px, #fff4 293px, transparent 296px, #0003),
    linear-gradient(#c8c8c8, #bcbcbc 12px, #111 16px, #080808 180px, #555 240px, #777 330px, #999 580px, #aaa);
  overflow: hidden;
  box-shadow: 0 2px 4px #0003;
`;

const Glass = styled.div`
  height: 332px;
  padding: 8px 13px 0 10px;
  background: #000;
  border: solid #c4c4c4;
  border-width: 5px 0 0;
  margin: 0 13px 0 10px;
  border-radius: 16px 16px 0 0;
`;

const Leds = styled.div`
  display: flex;
  gap: 6px;
  padding-left: 7px;
  margin-top: -7px;
  i {
    width: 6px;
    height: 6px;
    border: 1px solid #999;
    border-radius: 50%;
  }
`;

const Brand = styled.div`
  display: flex;
  align-items: center;
  justify-content: space-between;
  height: 20px;
  margin: -2px 0 16px -6px;
  color: #fff;
  font-family: ${notes};
  font-size: 11px;
  font-weight: 700;
`;

const ControlPad = styled.div`
  display: grid;
  grid-template-columns: 37px 37px 1fr 37px 37px;
  align-items: center;
  gap: 6px;
  margin-top: 21px;
`;

const PadColumn = styled.div`
  display: grid;
  gap: ${(p) => p.$gap}px;
`;

const DarkKey = styled.button`
  display: flex;
  flex-direction: column;
  align-items: center;
  justify-content: center;
  height: ${(p) => (p.$tall ? 30 : 22)}px;
  border: 1px solid #63676a;
  border-radius: 3px;
  background: linear-gradient(#44484b, #33373a 55%, #0a0c0d 58%, #16191b);
  color: #fff;
  font-family: ${notes};
  font-size: ${(p) => (p.$tall ? 11 : 9)}px;
  font-weight: 700;
  line-height: ${(p) => (p.$tall ? 14 : 10)}px;
  white-space: nowrap;
  span {
    display: flex;
    align-items: center;
    gap: 2px;
  }
  small {
    color: #35a8e0;
    font-size: ${(p) => (p.$tall ? 9 : 7)}px;
  }
`;

const Wheel = styled.button`
  display: grid;
  place-items: center;
  justify-self: center;
  width: 67px;
  height: 67px;
  border: 2px solid #4c4f52;
  border-radius: 50%;
  background: linear-gradient(#15181a, #3b3e41);
`;

const Keyboard = styled.div`
  display: grid;
  gap: 9px;
  height: 303px;
  align-content: start;
  padding: 10px 27px 0 22px;
  border-top: 2px solid #a5a5a5;
  background:
    repeating-linear-gradient(to right, #ffffff08 0 1px, #00000008 1px 3px, #ffffff0a 3px 4px),
    linear-gradient(to right, #6e6e6e, #8d8d8d 10px, #8f8f8f 288px, #b4b4b4 292px, #777 302px);
`;

const FunctionGrid = styled.div`
  display: grid;
  grid-template-columns: repeat(6, 35px);
  justify-content: space-between;
  row-gap: 9px;
`;

const NumberRow = styled.div`
  display: grid;
  grid-template-columns: 35px 1fr 35px;
`;

const Digits = styled.div`
  display: flex;
  justify-content: space-between;
  padding: 0 9px 0 8px;
`;

const Key = styled.button`
  display: flex;
  flex-direction: column;
  width: ${(p) => (p.$digit ? "46px" : "100%")};
  height: 27px;
  grid-column: ${(p) => (p.$wide ? "span 2" : "auto")};
  border-radius: 2px;
  box-shadow: 0 0 0 1px #6f6f6f, 0 0 0 2px #a5a5a5;
  font-family: ${notes};
  color: #111;
`;

const tones = { dark: "#111", orange: "#ff5a12", blue: "#0b3cab" };

const KeyTop = styled.span`
  width: 100%;
  height: ${(p) => (p.$tone ? 14 : 17)}px;
  border-radius: 2px 2px 0 0;
  background: ${(p) => tones[p.$tone] || (p.$digit ? "linear-gradient(#c2c2c2, #adadad)" : "linear-gradient(#fff, #f0f0f0)")};
  color: ${(p) => (p.$tone ? "#fff" : "#111")};
  font-family: ${(p) => (p.$serif ? math : notes)};
  font-size: ${(p) => (p.$digit || p.$large ? 15 : p.$tone ? 10 : 12)}px;
  font-style: ${(p) => (p.$serif ? "italic" : "normal")};
  font-weight: ${(p) => (p.$tone || p.$large ? 700 : 400)};
  line-height: ${(p) => (p.$digit || p.$large ? 17 : 14)}px;
  text-align: center;
  white-space: pre;
  svg {
    vertical-align: middle;
  }
  sup {
    font-size: 8px;
  }
`;

const CommaRow = styled.span`
  display: flex;
  align-items: baseline;
  justify-content: flex-end;
  gap: 8px;
  padding-right: 4px;
  small {
    font-size: 8px;
  }
`;

const KeySub = styled.span`
  display: flex;
  flex: 1;
  align-items: center;
  justify-content: ${(p) => (p.$center ? "center" : "space-between")};
  width: 100%;
  height: 10px;
  padding: 0 2px;
  border-radius: 0 0 2px 2px;
  background: ${(p) => (p.$digit ? "#e9e9e9" : "#cfcfcf")};
  color: #1c47a5;
  font-size: ${(p) => (p.$sign ? 10 : 8)}px;
  font-weight: 700;
  line-height: 10px;
  white-space: nowrap;
  b {
    color: #f0602a;
  }
  sup {
    font-size: 6px;
  }
`;
